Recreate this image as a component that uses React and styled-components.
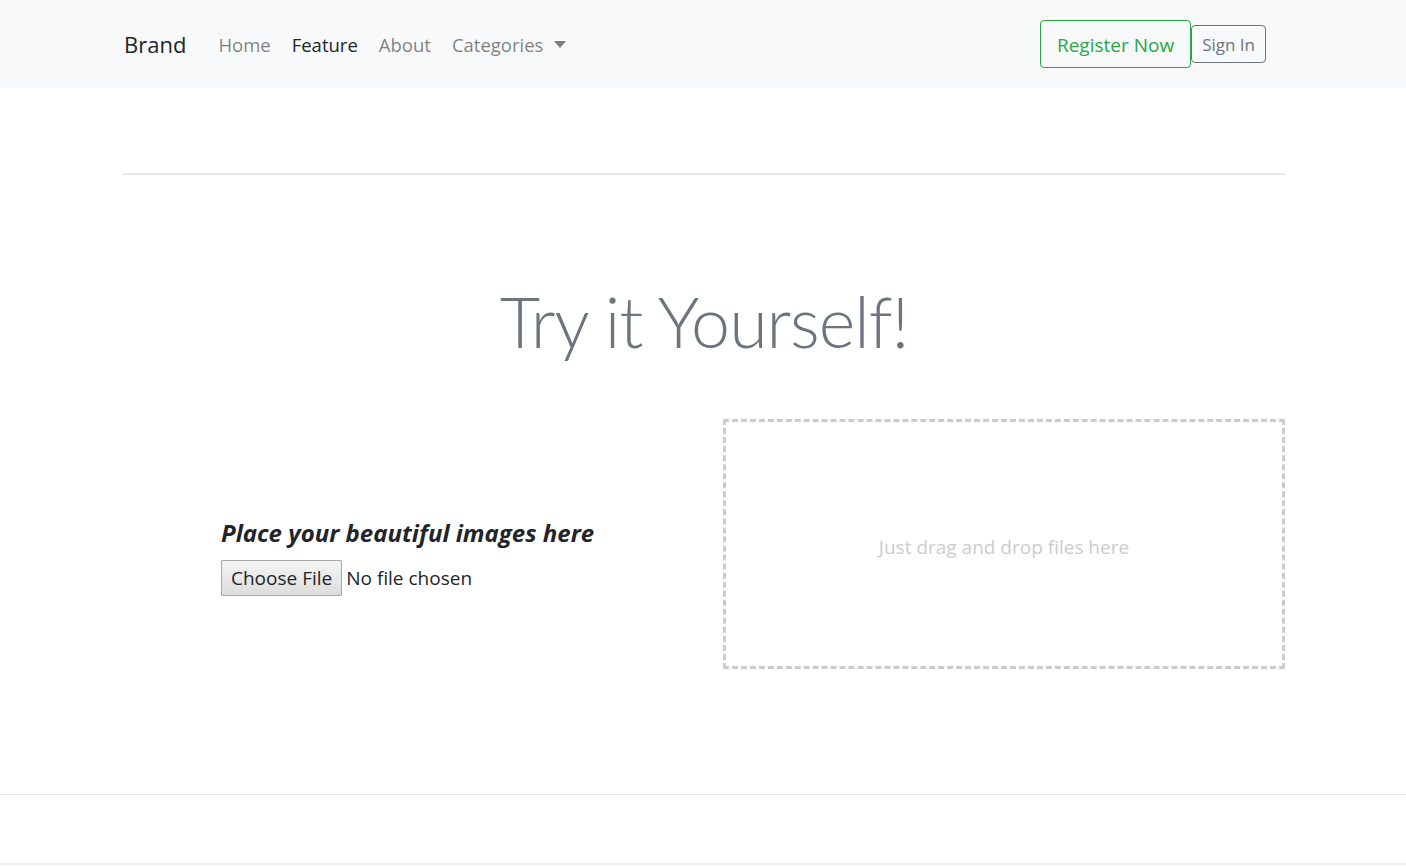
import React from "react";
import styled, { createGlobalStyle } from "styled-components";

const GlobalStyle = createGlobalStyle`
  body {
    margin: 0;
    background: #fff;
    font-family: "Open Sans", "Noto Sans", sans-serif;
    color: #212529;
  }
`;

const Navbar = styled.nav`
  height: 88px;
  background: #f8f9fa;
  display: flex;
  align-items: center;
  padding: 0 140px 0 124px;
`;

const Brand = styled.a`
  font-size: 22px;
  color: #212529;
  margin-right: 32px;
  text-decoration: none;
`;

const NavLinks = styled.ul`
  display: flex;
  gap: 21px;
  list-style: none;
  margin: 0;
  padding: 0;
  flex: 1;
`;

const NavLink = styled.li`
  font-size: 18.5px;
  color: ${(p) => (p.$active ? "#212529" : "rgba(0,0,0,.5)")};
  display: flex;
  align-items: center;
  gap: 11px;
`;

const Caret = styled.span`
  width: 0;
  height: 0;
  border-left: 6px solid transparent;
  border-right: 6px solid transparent;
  border-top: 7px solid rgba(0, 0, 0, 0.5);
`;

const Button = styled.button`
  font-family: inherit;
  background: transparent;
  border: 1px solid ${(p) => p.$color};
  color: ${(p) => p.$color};
  border-radius: 4px;
  font-size: ${(p) => (p.$large ? "19px" : "17px")};
  height: ${(p) => (p.$large ? "48px" : "38px")};
  padding: 0 ${(p) => (p.$large ? "16px" : "10px")};
  padding-top: ${(p) => (p.$large ? "2px" : "0")};
`;

const Container = styled.main`
  margin: 0 121px 0 123px;
  padding-top: 85px;
`;

const Rule = styled.hr`
  border: 0;
  border-top: 2px solid #e5e5e5;
  margin: 0;
`;

const Heading = styled.h1`
  margin: 111px 0 0;
  text-align: center;
  font-family: "Lato", "Open Sans", sans-serif;
  font-weight: 300;
  font-size: 70px;
  letter-spacing: -1px;
  line-height: 1;
  color: #6c757d;
`;

const Row = styled.div`
  display: grid;
  grid-template-columns: 1fr 562px;
  margin-top: 63px;
`;

const UploadCol = styled.div`
  display: flex;
  flex-direction: column;
  justify-content: center;
  padding-left: 98px;
  padding-top: 23px;
`;

const UploadTitle = styled.h4`
  margin: 0 0 11px;
  font-style: italic;
  font-weight: 700;
  font-size: 24px;
  color: #212529;
`;

const FileRow = styled.div`
  display: flex;
  align-items: center;
  gap: 4px;
  font-size: 19px;
`;

const FileButton = styled.span`
  border: 1px solid #a8a8a8;
  background: linear-gradient(#f5f5f5, #dcdcdc);
  height: 34px;
  padding: 0 9px;
  display: flex;
  align-items: center;
  border-radius: 1px;
`;

const DropZone = styled.div`
  height: 244px;
  border: 3px dashed #ccc;
  display: flex;
  align-items: center;
  justify-content: center;
  padding-top: 6px;
  box-sizing: border-box;
  height: 250px;
  color: #ccc;
  font-size: 19px;
`;

const Footer = styled.footer`
  margin-top: 125px;
  border-top: 1px solid #e3e3e3;
  height: 68px;
  border-bottom: 2px solid #f0f0f0;
`;

export default function App() {
  return (
    <>
      <GlobalStyle />
      <Navbar>
        <Brand>Brand</Brand>
        <NavLinks>
          <NavLink>Home</NavLink>
          <NavLink $active>Feature</NavLink>
          <NavLink>About</NavLink>
          <NavLink>
            Categories <Caret />
          </NavLink>
        </NavLinks>
        <Button $large $color="#28a745">Register Now</Button>
        <Button $color="#6c757d">Sign In</Button>
      </Navbar>
      <Container>
        <Rule />
        <Heading>Try it Yourself!</Heading>
        <Row>
          <UploadCol>
            <UploadTitle>Place your beautiful images here</UploadTitle>
            <FileRow>
              <FileButton>Choose File</FileButton>
              <span>No file chosen</span>
            </FileRow>
          </UploadCol>
          <DropZone>Just drag and drop files here</DropZone>
        </Row>
      </Container>
      <Footer />
    </>
  );
}
